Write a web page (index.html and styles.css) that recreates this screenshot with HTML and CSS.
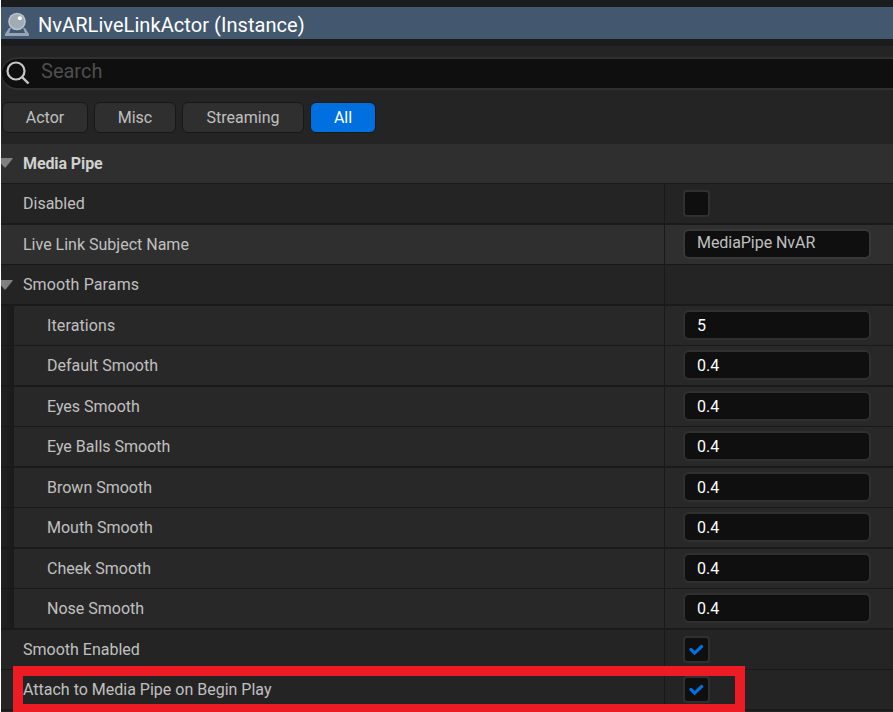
FILE: index.html
```html
<!DOCTYPE html>
<html lang="en">
<head>
<meta charset="utf-8">
<title>Details</title>
<link rel="stylesheet" href="styles.css">
</head>
<body>
<main class="panel">
  <header class="title">
    <svg class="actor-icon" width="26" height="26" viewBox="0 0 26 26">
      <path d="M5 16 1 22v2h24v-2l-4-6-2 0 2 5H5l2-5z" fill="#94a5b8"/>
      <circle cx="13" cy="9.5" r="8.8" fill="#b9c2cb"/>
      <circle cx="13" cy="9.500" r="7.200" fill="#a1abb5"/>
      <circle cx="15.8" cy="6.2" r="2" fill="#fff"/>
    </svg>
    <h1>NvARLiveLinkActor (Instance)</h1>
  </header>
  <div class="search">
    <svg width="24" height="24" viewBox="0 0 24 24" fill="none" stroke="#c8c8c8" stroke-width="2.2">
      <circle cx="10" cy="10" r="8.5"/><path d="m16 16 6.5 6.5" stroke-width="2.4"/>
    </svg>
    <span>Search</span>
  </div>
  <nav class="filters">
    <button class="f-actor">Actor</button><button class="f-misc">Misc</button><button class="f-streaming">Streaming</button><button class="f-all active">All</button>
  </nav>
  <section class="category"><svg class="arrow" width="12" height="10" viewBox="0 0 12 10"><path d="M0 0h11.5q.5.4 0 1L5 9q-1 1-2 0L0 5.500z"/></svg>Media Pipe</section>
  <section class="rows">
    <div class="row"><div class="name">Disabled</div><div class="value"><i class="check"></i></div></div>
    <div class="row hover"><div class="name">Live Link Subject Name</div><div class="value"><span class="field text">MediaPipe NvAR</span></div></div>
    <div class="row"><div class="name wide"><svg class="arrow" width="12" height="10" viewBox="0 0 12 10"><path d="M0 0h11.5q.5.4 0 1L5 9q-1 1-2 0L0 5.500z"/></svg>Smooth Params</div><div class="value"></div></div>
    <div class="row nested"><div class="name wide">Iterations</div><div class="value"><span class="field">5</span></div></div>
    <div class="row nested"><div class="name">Default Smooth</div><div class="value"><span class="field">0.4</span></div></div>
    <div class="row nested"><div class="name">Eyes Smooth</div><div class="value"><span class="field">0.4</span></div></div>
    <div class="row nested"><div class="name">Eye Balls Smooth</div><div class="value"><span class="field">0.4</span></div></div>
    <div class="row nested"><div class="name">Brown Smooth</div><div class="value"><span class="field">0.4</span></div></div>
    <div class="row nested"><div class="name">Mouth Smooth</div><div class="value"><span class="field">0.4</span></div></div>
    <div class="row nested"><div class="name">Cheek Smooth</div><div class="value"><span class="field">0.4</span></div></div>
    <div class="row nested"><div class="name">Nose Smooth</div><div class="value"><span class="field">0.4</span></div></div>
    <div class="row"><div class="name">Smooth Enabled</div><div class="value"><i class="check"><svg width="15" height="12" viewBox="0 0 15 12"><path d="m2 5.500 3.600 3.600 7-6.600"/></svg></i></div></div>
    <div class="row"><div class="name">Attach to Media Pipe on Begin Play</div><div class="value"><i class="check"><svg width="15" height="12" viewBox="0 0 15 12"><path d="m2 5.500 3.600 3.600 7-6.600"/></svg></i></div></div>
    <div class="row"></div>
  </section>
  <div class="highlight"></div>
</main>
</body>
</html>
```
FILE: styles.css
```css
* { box-sizing: border-box; }
body { margin: 0; background: #fff; overflow: hidden; }
.panel {
  position: relative;
  height: 712px;
  margin-left: 1px;
  overflow: hidden;
  background: #242424;
  color: #c0c0c0;
  font: 16px/20px Roboto, sans-serif;
}
.title {
  display: flex;
  height: 46px;
  padding-left: 3px;
  border-top: 7px solid #1a1c1d;
  border-bottom: 7px solid #1a1c1d;
  background: #43586f;
}
.actor-icon { margin-top: 5px; }
h1 { margin: 0 0 0 8px; font-size: 20px; font-weight: 400; line-height: 36px; letter-spacing: 0.06px; color: #fff; }
.search {
  display: flex;
  height: 33px;
  margin-top: 11px;
  padding: 2px 0 0 4px;
  border: 2px solid #303030;
  border-right: 0;
  border-left-width: 1px;
  border-radius: 17px 0 0 17px;
  background: #0f0f0f;
  color: #4e4e4e;
  font-size: 20px;
}
.search span { margin-left: 11px; }
.filters { display: flex; gap: 6px; padding: 12px 0 11px 1px; }
button {
  height: 31px;
  padding: 0;
  border: 1.500px solid #171717;
  border-radius: 6px;
  background: #2f2f2f;
  color: #c0c0c0;
  font: inherit;
}
.f-actor { width: 86px; }
.f-misc { width: 82px; }
.f-streaming { width: 122px; }
.f-all { width: 66px; }
.active { background: #0070e0; color: #fff; }
.category {
  position: relative;
  height: 39px;
  padding-left: 22px;
  background: #2f2f2f;
  color: #d0d0d0;
  font-weight: 700;
  line-height: 39px;
  letter-spacing: -0.1px;
}
.arrow { position: absolute; left: 0; top: 15px; fill: #808080; }
.category .arrow { top: 14px; }
.row {
  display: grid;
  grid-template-columns: 663px 1fr;
  height: 40px;
  border-top: 1px solid #191919;
  background: #242424;
}
.row:nth-child(even) { height: 41px; border-top: 2px solid #1a1a1a; }
.name { position: relative; padding-left: 22px; line-height: 39px; }
.wide { letter-spacing: 0.12px; }
.value { display: flex; align-items: flex-start; padding-left: 18px; border-left: 1px solid #191919; }
.hover { background: #2f2f2f; }
.nested { background: linear-gradient(90deg, #222 0, #1a1a1a 13px, #282828 13px); }
.nested .name { padding-left: 46px; }
.field {
  width: 188px;
  height: 30px;
  margin-top: 4px;
  padding-left: 12px;
  border: 2px solid #303030;
  border-radius: 6px;
  background: #0f0f0f;
  color: #fff;
  line-height: 27px;
}
.field.text { border-color: #383838; color: #c0c0c0; line-height: 24px; letter-spacing: -0.05px; }
.check {
  display: grid;
  place-items: center;
  width: 27px;
  height: 27px;
  margin-top: 6px;
  border: 2px solid #303030;
  border-radius: 4px;
  background: #0f0f0f;
}
.check path { fill: none; stroke: #0070e0; stroke-width: 3.2; stroke-linecap: round; }
.highlight {
  position: absolute;
  left: 12px;
  top: 666px;
  width: 732px;
  height: 48px;
  border: 10px solid #ed1c24;
}
```
